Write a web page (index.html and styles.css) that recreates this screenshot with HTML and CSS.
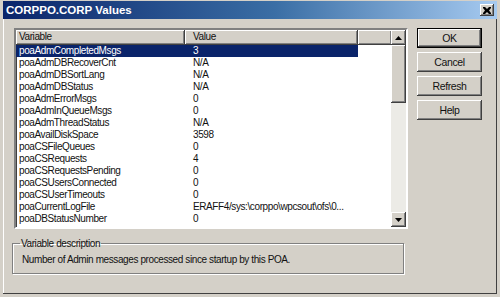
FILE: index.html
```html
<!DOCTYPE html>
<html lang="en">
<head>
    <meta charset="UTF-8">
    <title>CORPPO.CORP Values</title>
    <link rel="stylesheet" href="styles.css">
</head>
<body>

    <div class="window">
        <div class="titlebar">
            <span class="title">CORPPO.CORP Values</span>
            <span class="close-btn">
                <svg width="8" height="7" viewBox="0 0 8 7">
                    <path d="M0 0h2l2 2 2-2h2v1l-2 2.5 2 2.5v1h-2l-2-2-2 2h-2v-1l2-2.5-2-2.5z" fill="#000"/>
                </svg>
            </span>
        </div>

        <div class="client">
            <div class="top-row">
                <div class="listview">
                    <div class="list-content">
                        <div class="list-header">
                            <div class="col-var hdr">Variable</div>
                            <div class="col-val hdr">Value</div>
                            <div class="hdr hdr-fill"></div>
                        </div>
                        <div class="list-rows" id="rows"></div>
                    </div>
                    <div class="scrollbar">
                        <div class="sb-btn">
                            <svg width="7" height="4" viewBox="0 0 7 4"><path d="M3.5 0L7 4H0z" fill="#000"/></svg>
                        </div>
                        <div class="sb-thumb"></div>
                        <div class="sb-track"></div>
                        <div class="sb-btn">
                            <svg width="7" height="4" viewBox="0 0 7 4"><path d="M0 0h7L3.5 4z" fill="#000"/></svg>
                        </div>
                    </div>
                </div>

                <div class="buttons">
                    <button class="btn btn-default">OK</button>
                    <button class="btn">Cancel</button>
                    <button class="btn">Refresh</button>
                    <button class="btn">Help</button>
                </div>
            </div>

            <fieldset class="groupbox">
                <legend>Variable description</legend>
                <div class="desc">Number of Admin messages processed since startup by this POA.</div>
            </fieldset>
        </div>
    </div>

    <script>
        // variable / value pairs shown in the list
        const values = [
            ['poaAdmCompletedMsgs', '3'],
            ['poaAdmDBRecoverCnt', 'N/A'],
            ['poaAdmDBSortLang', 'N/A'],
            ['poaAdmDBStatus', 'N/A'],
            ['poaAdmErrorMsgs', '0'],
            ['poaAdmInQueueMsgs', '0'],
            ['poaAdmThreadStatus', 'N/A'],
            ['poaAvailDiskSpace', '3598'],
            ['poaCSFileQueues', '0'],
            ['poaCSRequests', '4'],
            ['poaCSRequestsPending', '0'],
            ['poaCSUsersConnected', '0'],
            ['poaCSUserTimeouts', '0'],
            ['poaCurrentLogFile', 'ERAFF4/sys:\\corppo\\wpcsout\\ofs\\0...'],
            ['poaDBStatusNumber', '0']
        ];

        const rowsElement = document.getElementById('rows');

        values.forEach(([name, value], i) => {
            const row = document.createElement('div');
            row.className = 'row';
            if (i === 0) row.classList.add('selected');
            row.innerHTML = `<div class="col-var">${name}</div><div class="col-val">${value}</div>`;
            rowsElement.appendChild(row);
        });
    </script>

</body>
</html>
```

FILE: styles.css
```css
body {
    margin: 0;
    font-family: "Liberation Sans", Arial, sans-serif;
    font-size: 10px;
    letter-spacing: -0.4px;
    color: #111;
    background-color: #d4d0c8;
}

.window {
    width: 500px;
    height: 297px;
    box-sizing: border-box;
    background-color: #d4d0c8;
    border: 3px solid #d4d0c8;
    border-top-width: 1px;
    box-shadow: inset -1px -1px 0 #404040, inset 1px 1px 0 #ffffff;
    display: flex;
    flex-direction: column;
}

.titlebar {
    height: 18px;
    display: flex;
    align-items: center;
    justify-content: space-between;
    padding: 0 2px 0 3px;
    background: linear-gradient(to right, #0a246a 0%, #3a6ea5 55%, #a6caf0 100%);
}

.title {
    color: #fff;
    font-weight: bold;
    font-size: 11.5px;
    letter-spacing: 0;
}

.close-btn {
    width: 14px;
    height: 12px;
    background-color: #d4d0c8;
    box-shadow: inset -1px -1px 0 #404040, inset 1px 1px 0 #ffffff, inset -2px -2px 0 #808080;
    display: flex;
    align-items: center;
    justify-content: center;
    margin-right: 1px;
}

.client {
    flex: 1;
    padding: 9px 15px 0 11px;
}

.top-row {
    display: flex;
    gap: 9px;
}

/* list view */
.listview {
    width: 394px;
    height: 201px;
    box-sizing: border-box;
    border: 2px solid;
    border-color: #808080 #ffffff #ffffff #808080;
    box-shadow: inset 1px 1px 0 #404040;
    background-color: #fff;
    display: flex;
}

.list-content {
    flex: 1;
    overflow: hidden;
}

.list-header {
    display: flex;
    height: 15px;
}

.hdr {
    background-color: #d4d0c8;
    box-sizing: border-box;
    line-height: 14px;
    border-right: 1px solid #404040;
    border-bottom: 1px solid #404040;
    box-shadow: inset 1px 1px 0 #ffffff, inset -1px -1px 0 #808080;
}

.hdr-fill {
    flex: 1;
    border-right: none;
}

.col-var {
    width: 169px;
    padding-left: 3px;
    box-sizing: border-box;
    white-space: nowrap;
}

.col-val {
    width: 173px;
    padding-left: 8px;
    box-sizing: border-box;
    white-space: nowrap;
}

.row {
    display: flex;
    height: 12px;
    line-height: 12px;
    width: 342px;
}

.row.selected {
    background-color: #0a246a;
    color: #fff;
}

/* scrollbar */
.scrollbar {
    width: 15px;
    display: flex;
    flex-direction: column;
}

.sb-btn,
.sb-thumb {
    background-color: #d4d0c8;
    box-shadow: inset -1px -1px 0 #404040, inset 1px 1px 0 #ffffff, inset -2px -2px 0 #808080;
}

.sb-btn {
    height: 15px;
    display: flex;
    align-items: center;
    justify-content: center;
}

.sb-thumb {
    height: 58px;
}

.sb-track {
    flex: 1;
    background-color: #ecebe6;
}

/* buttons */
.buttons {
    display: flex;
    flex-direction: column;
    gap: 4px;
}

.btn {
    width: 65px;
    height: 20px;
    font-family: "Liberation Sans", Arial, sans-serif;
    font-size: 10.5px;
    letter-spacing: -0.4px;
    color: #111;
    background-color: #d4d0c8;
    border: none;
    padding: 0;
    box-shadow: inset -1px -1px 0 #404040, inset 1px 1px 0 #ffffff, inset -2px -2px 0 #808080;
}

.btn-default {
    border: 1px solid #000;
}

/* variable description group */
.groupbox {
    margin: 8px 0 0 -2px;
    width: 392px;
    box-sizing: border-box;
    height: 37px;
    padding: 0 0 0 9px;
    border: 1px solid #808080;
    box-shadow: 1px 1px 0 #ffffff, inset 1px 1px 0 #ffffff;
}

.groupbox legend {
    padding: 0 1px;
    margin-left: -2px;
    line-height: 13px;
}

.desc {
    margin-top: 3px;
    line-height: 13px;
}
```
